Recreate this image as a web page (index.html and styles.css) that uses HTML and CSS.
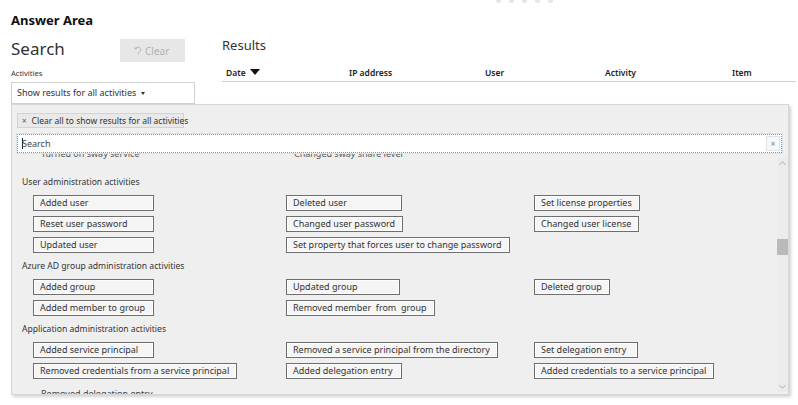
FILE: index.html
```html
<!DOCTYPE html>
<html>
<head>
<meta charset="utf-8">
<link rel="stylesheet" href="styles.css">
</head>
<body>
<div class="dots"><span></span><span></span><span></span><span></span><span></span></div>
<div class="page">
  <h1 class="title">Answer Area</h1>
  <div class="top">
    <div class="left">
      <div class="search-row">
        <span class="search-h">Search</span>
        <span class="clear-btn"><svg class="undo" viewBox="0 0 8 10" width="8" height="10"><path d="M1.2 2.6 C2.5 0.6 6.8 0.6 6.8 3.6 C6.8 5.6 4.6 6 4.4 8.2" fill="none" stroke="#b5b5b5" stroke-width="1"/><path d="M0.4 1.2 L1.4 3.2 L3.2 2.2" fill="none" stroke="#b5b5b5" stroke-width="0.9"/></svg>Clear</span>
      </div>
      <div class="label">Activities</div>
      <div class="dropdown">Show results for all activities <span class="caret"></span></div>
    </div>
    <div class="right">
      <div class="results-h">Results</div>
      <div class="thead">
        <span>Date <span class="tri"></span></span>
        <span>IP address</span>
        <span>User</span>
        <span>Activity</span>
        <span>Item</span>
      </div>
    </div>
  </div>
  <div class="panel">
    <div class="chip"><span class="chip-x">×</span>Clear all to show results for all activities</div>
    <div class="search-input"><span class="cursor"></span><span class="ph">Search</span><span class="x-btn">×</span></div>
    <div class="list-wrap">
      <div class="list">
        <div class="grid">
          <span class="cut">Turned on sway service</span>
          <span class="cut">Changed sway share level</span>
          <span class="cut"></span>

          <div class="heading first">User administration activities</div>
          <span class="btn c1">Added user</span>
          <span class="btn c2">Deleted user</span>
          <span class="btn c3">Set license properties</span>
          <span class="btn c1">Reset user password</span>
          <span class="btn c2">Changed user password</span>
          <span class="btn c3">Changed user license</span>
          <span class="btn c1">Updated user</span>
          <span class="btn c2">Set property that forces user to change password</span>
          <span class="empty"></span>

          <div class="heading">Azure AD group administration activities</div>
          <span class="btn c1">Added group</span>
          <span class="btn c2 narrow">Updated group</span>
          <span class="btn short">Deleted group</span>
          <span class="btn c1">Added member to group</span>
          <span class="btn c2">Removed member&nbsp; from&nbsp; group</span>
          <span class="empty"></span>

          <div class="heading">Application administration activities</div>
          <span class="btn c1">Added service principal</span>
          <span class="btn c2">Removed a service principal from the directory</span>
          <span class="btn c3">Set delegation entry</span>
          <span class="btn c1">Removed credentials from a service principal</span>
          <span class="btn c2">Added delegation entry</span>
          <span class="btn c3">Added credentials to a service principal</span>
          <span class="cut last">Removed delegation entry</span>
          <span class="empty"></span>
          <span class="empty"></span>
        </div>
      </div>
      <div class="scrollbar">
        <svg class="chev up" viewBox="0 0 7 4" width="7" height="4"><path d="M0.5 3.5 L3.5 0.8 L6.5 3.5" fill="none" stroke="#aaa" stroke-width="1"/></svg>
        <div class="thumb"></div>
        <svg class="chev down" viewBox="0 0 7 4" width="7" height="4"><path d="M0.5 0.5 L3.5 3.2 L6.5 0.5" fill="none" stroke="#aaa" stroke-width="1"/></svg>
      </div>
    </div>
  </div>
</div>
</body>
</html>
```

FILE: styles.css
```css
* { box-sizing: border-box; }
html, body { margin: 0; padding: 0; background: #fff; }
body {
  font-family: "Noto Sans", "Open Sans", sans-serif;
  color: #333;
  width: 798px;
  height: 405px;
  overflow: hidden;
}

.dots {
  height: 6px;
  display: flex;
  gap: 8px;
  padding-left: 496px;
}
.dots span {
  width: 5px;
  height: 5px;
  margin-top: -2px;
  border-radius: 50%;
  background: #e6e6e6;
}

.page { padding-left: 11px; }

.title {
  margin: 5px 0 0 0;
  font-size: 13px;
  line-height: 18px;
  font-weight: 700;
  color: #111;
  height: 18px;
}

.top { display: flex; gap: 27px; }
.left { width: 184px; padding-top: 8px; }
.search-row { display: flex; align-items: flex-start; height: 25px; }
.search-h {
  font-size: 17px;
  line-height: 24px;
  color: #333;
  width: 109px;
}
.clear-btn {
  margin-top: 2px;
  width: 65px;
  height: 23px;
  background: #e7e7e7;
  color: #b3b3b3;
  font-size: 10px;
  display: flex;
  align-items: center;
  padding-left: 14px;
  gap: 3px;
}
.label {
  margin-top: 6px;
  font-size: 7.5px;
  line-height: 10px;
  color: #333;
}
.dropdown {
  margin-top: 4px;
  height: 22px;
  border: 1px solid #cfcfcf;
  background: #fff;
  font-size: 9px;
  line-height: 20px;
  padding-left: 5px;
  color: #333;
  display: flex;
  align-items: center;
  gap: 4px;
}
.caret {
  width: 0; height: 0;
  border-left: 2.5px solid transparent;
  border-right: 2.5px solid transparent;
  border-top: 3px solid #333;
  margin-left: 1px;
}

.right { width: 574px; padding-top: 6px; }
.results-h { font-size: 13px; line-height: 20px; color: #333; }
.thead {
  margin-top: 9px;
  height: 18px;
  border-bottom: 1px solid #cfcfcf;
  display: grid;
  grid-template-columns: 123px 136px 120px 127px 1fr;
  padding-left: 4px;
  font-size: 8.5px;
  font-weight: 600;
  line-height: 17px;
  color: #222;
}
.tri {
  display: inline-block;
  width: 0; height: 0;
  border-left: 5px solid transparent;
  border-right: 5px solid transparent;
  border-top: 6px solid #111;
  vertical-align: 1px;
  margin-left: 2px;
}

.panel {
  width: 778px;
  height: 291px;
  border: 1px solid #d6d6d6;
  background: #efefef;
  box-shadow: 2px 2px 3px rgba(0,0,0,0.18);
  padding: 8px 6px 0 5px;
  display: flex;
  flex-direction: column;
}
.chip {
  align-self: flex-start;
  height: 15px;
  width: 167px;
  border: 1px solid #d2d2d2;
  background: #e9e9e9;
  font-size: 8.5px;
  line-height: 13px;
  color: #333;
  padding-left: 4px;
  white-space: nowrap;
}
.chip-x { font-size: 8px; margin-right: 5px; color: #555; }
.search-input {
  margin-top: 6px;
  height: 19px;
  background: #fff;
  border: 1px dotted #6f9cc2;
  box-shadow: 0 0 0 1px #d5e4ef;
  display: flex;
  align-items: center;
  padding-left: 4px;
  font-size: 9px;
  color: #444;
  position: relative;
}
.cursor { width: 1px; height: 11px; background: #222; margin-right: -1px; }
.x-btn {
  margin-left: auto;
  margin-right: 1px;
  width: 14px;
  height: 15px;
  border: 1px solid #e3e3e3;
  background: #f7f7f7;
  color: #777;
  font-size: 8px;
  line-height: 13px;
  text-align: center;
}

.list-wrap {
  flex: 1;
  display: flex;
  margin: 0 -6px 0 -5px;
  min-height: 0;
}
.list { flex: 1; overflow: hidden; }
.grid {
  display: grid;
  grid-template-columns: 253px 248px 1fr;
  row-gap: 5px;
  padding-left: 21px;
  margin-top: -7px;
  font-size: 9px;
  color: #333;
}
.cut {
  height: 16px;
  line-height: 14px;
  padding-left: 7px;
  color: #555;
  white-space: nowrap;
  border: 1px solid transparent;
}
.cut.last { margin-top: 2px; color: #444; }
.heading {
  grid-column: 1 / -1;
  margin-left: -11px;
  height: 16px;
  line-height: 16px;
  font-size: 8.6px;
  color: #333;
}
.heading.first { margin-top: 7px; }
.btn {
  justify-self: start;
  height: 16px;
  border: 1px solid #6e6e6e;
  background: #f5f5f5;
  box-shadow: inset 0 0 0 1px #fdfdfd;
  line-height: 14px;
  padding: 0 7px 0 6px;
  white-space: nowrap;
  color: #333;
}
.c1 { min-width: 121px; }
.c2 { min-width: 116px; }
.c2.narrow { min-width: 114px; }
.c3 { min-width: 104px; }
.short { min-width: 71px; }
.empty { height: 16px; }

.scrollbar {
  width: 11px;
  margin-top: 5px;
  margin-bottom: 2px;
  display: flex;
  flex-direction: column;
  align-items: center;
  background: #ececec;
}
.chev.up { margin-top: 3px; }
.thumb {
  margin-top: 74px;
  width: 11px;
  height: 16px;
  background: #bababa;
}
.chev.down { margin-top: auto; margin-bottom: 3px; }
```
